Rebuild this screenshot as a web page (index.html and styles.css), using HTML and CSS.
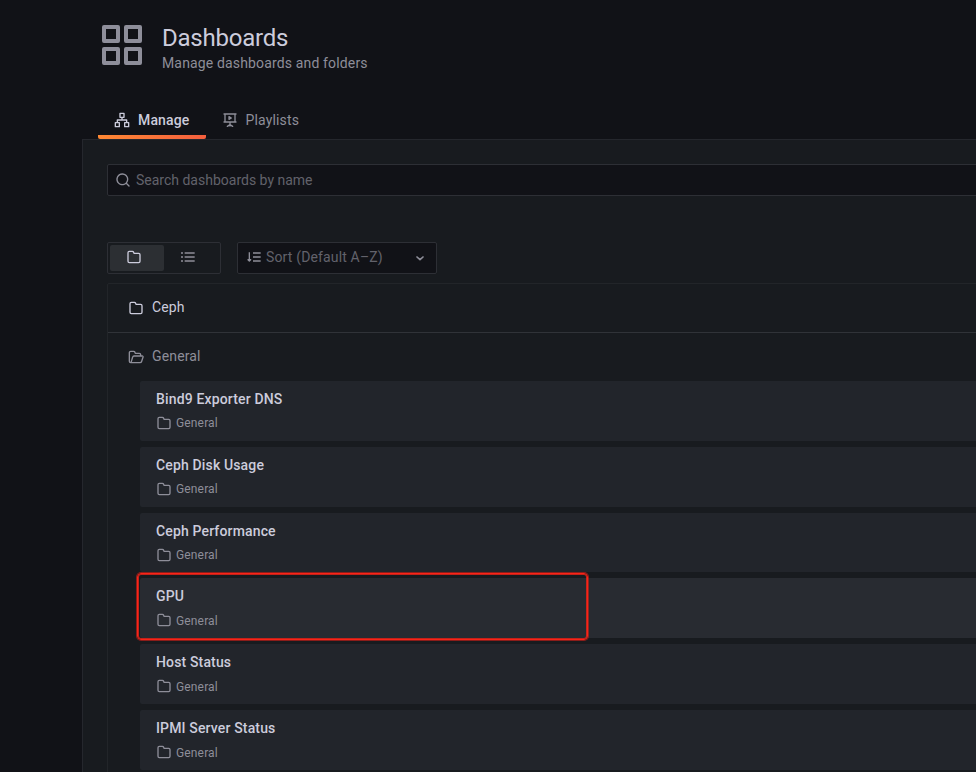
FILE: index.html
```html
<!DOCTYPE html>
<html lang="en">
<head>
<meta charset="utf-8">
<title>Dashboards</title>
<link rel="stylesheet" href="styles.css">
</head>
<body>
<svg class="sprite" aria-hidden="true">
  <symbol id="apps" viewBox="0 0 24 24"><path fill-rule="evenodd" d="M3 2h7a1 1 0 0 1 1 1v7a1 1 0 0 1-1 1H3a1 1 0 0 1-1-1V3a1 1 0 0 1 1-1Zm1 2v5h5V4ZM14 2h7a1 1 0 0 1 1 1v7a1 1 0 0 1-1 1h-7a1 1 0 0 1-1-1V3a1 1 0 0 1 1-1Zm1 2v5h5V4ZM3 13h7a1 1 0 0 1 1 1v7a1 1 0 0 1-1 1H3a1 1 0 0 1-1-1v-7a1 1 0 0 1 1-1Zm1 2v5h5v-5ZM14 13h7a1 1 0 0 1 1 1v7a1 1 0 0 1-1 1h-7a1 1 0 0 1-1-1v-7a1 1 0 0 1 1-1Zm1 2v5h5v-5Z"/></symbol>
  <symbol id="folder" viewBox="0 0 24 24"><path d="M19,5.5H12.72l-.32-1a3,3,0,0,0-2.84-2H5a3,3,0,0,0-3,3v13a3,3,0,0,0,3,3H19a3,3,0,0,0,3-3V8.5A3,3,0,0,0,19,5.5Zm1,13a1,1,0,0,1-1,1H5a1,1,0,0,1-1-1V5.5a1,1,0,0,1,1-1H9.56a1,1,0,0,1,.95.68l.54,1.64A1,1,0,0,0,12,7.5h7a1,1,0,0,1,1,1Z"/></symbol>
  <symbol id="folder-open" viewBox="0 0 24 24"><path class="line" d="M4 20.5a2 2 0 0 1-2-2v-13a2 2 0 0 1 2-2h4.5a2 2 0 0 1 1.9 1.4l.5 1.6H17a2 2 0 0 1 2 2v2M4 20.5h14a2.5 2.5 0 0 0 2.4-1.8L22.6 12a1.2 1.2 0 0 0-1.2-1.5H9a2 2 0 0 0-2 1.5l-2 7a2 2 0 0 1-1 1.5"/></symbol>
  <symbol id="search" viewBox="0 0 24 24"><path d="M21.71,20.29,18,16.61A9,9,0,1,0,16.61,18l3.68,3.68a1,1,0,0,0,1.42,0A1,1,0,0,0,21.71,20.29ZM11,18a7,7,0,1,1,7-7A7,7,0,0,1,11,18Z"/></symbol>
  <symbol id="sitemap" viewBox="0 0 24 24"><path class="line" d="M9 2h6v6H9ZM2 16h6v6H2ZM16 16h6v6h-6ZM12 8v4M5 16v-4h14v4"/></symbol>
  <symbol id="presentation" viewBox="0 0 24 24"><path class="line" d="M3 3h18M4.5 3v12h15V3M3 15h18M12 15v6M8 21.5l4-2.500 4 2.500M10.500 7v4l3.500-2Z"/></symbol>
  <symbol id="list" viewBox="0 0 24 24"><path class="line flat" d="M7 6h15M7 12h15M7 18h15M1.5 6h3M1.5 12h3M1.5 18h3"/></symbol>
  <symbol id="sort" viewBox="0 0 24 24"><path class="line flat" d="M10.5 6H22M10.5 12H22M10.5 18H22M5 5v13"/><path class="line" d="m3 16 2 2 2-2Z"/></symbol>
  <symbol id="down" viewBox="0 0 24 24"><path class="line bold" d="m7.5 10.5 4.5 4 4.5-4"/></symbol>
</svg>

<header class="page-header">
  <svg class="page-logo"><use href="#apps"/></svg>
  <div>
    <h1>Dashboards</h1>
    <p class="subtitle">Manage dashboards and folders</p>
  </div>
</header>

<nav class="tabs">
  <a class="tab active"><svg class="icon"><use href="#sitemap"/></svg>Manage</a>
  <a class="tab"><svg class="icon"><use href="#presentation"/></svg>Playlists</a>
</nav>

<main class="panel">
  <div class="search"><svg class="icon"><use href="#search"/></svg><span>Search dashboards by name</span></div>

  <div class="toolbar">
    <div class="layout-toggle">
      <span class="option selected"><svg class="icon"><use href="#folder"/></svg></span>
      <span class="option"><svg class="icon"><use href="#list"/></svg></span>
    </div>
    <div class="sort"><svg class="icon"><use href="#sort"/></svg><span>Sort (Default A–Z)</span><svg class="icon chevron"><use href="#down"/></svg></div>
  </div>

  <section class="folders">
    <div class="folder closed"><svg class="icon"><use href="#folder"/></svg><span>Ceph</span></div>
    <div class="folder open"><svg class="icon"><use href="#folder-open"/></svg><span>General</span></div>
    <div class="cards">
      <article class="card"><h2>Bind9 Exporter DNS</h2><p><svg class="icon"><use href="#folder"/></svg>General</p></article>
      <article class="card"><h2>Ceph Disk Usage</h2><p><svg class="icon"><use href="#folder"/></svg>General</p></article>
      <article class="card"><h2>Ceph Performance</h2><p><svg class="icon"><use href="#folder"/></svg>General</p></article>
      <article class="card hovered"><h2>GPU</h2><p><svg class="icon"><use href="#folder"/></svg>General</p><span class="highlight"></span></article>
      <article class="card"><h2>Host Status</h2><p><svg class="icon"><use href="#folder"/></svg>General</p></article>
      <article class="card"><h2>IPMI Server Status</h2><p><svg class="icon"><use href="#folder"/></svg>General</p></article>
    </div>
  </section>
</main>
</body>
</html>
```
FILE: styles.css
```css
* { box-sizing: border-box; }

html, body { height: 100%; }

body {
  margin: 0;
  overflow: hidden;
  background: #111217;
  color: #ccccdc;
  font: 14px/22px Roboto, "Liberation Sans", sans-serif;
  letter-spacing: 0.15px;
}

h1, h2, p { margin: 0; }

.sprite { position: absolute; width: 0; height: 0; }
.icon { width: 16px; height: 16px; flex: none; fill: currentColor; }
.line { fill: none; stroke: currentColor; stroke-width: 2; stroke-linejoin: round; stroke-linecap: round; }
.flat { stroke-linecap: butt; }
.bold { stroke-width: 2.5; }

.page-header {
  display: flex;
  height: 99px;
  padding: 21px 0 0 98px;
  gap: 16px;
}
.page-logo { width: 48px; height: 48px; fill: #8e8e9a; }
h1 { font-size: 24px; line-height: 28px; font-weight: 400; letter-spacing: -0.22px; padding-top: 3px; }
.subtitle { color: #8e8e99; line-height: 22px; }

.tabs { display: flex; height: 40px; padding-left: 98px; }
.tab {
  display: flex;
  align-items: center;
  gap: 8px;
  height: 40px;
  padding: 2px 16px 0;
  color: #8e8e99;
}
.tab + .tab { gap: 7.5px; }
.tab.active {
  width: 108px;
  color: #ccccdc;
  font-weight: 500;
  background: linear-gradient(90deg, #ff8833, #f55f3e) bottom / 100% 4px no-repeat;
  border-radius: 2px;
}

.panel {
  height: 640px;
  margin-left: 82px;
  padding: 24px 0 0 24px;
  border: solid #25272d;
  border-width: 1px 0 0 1px;
  background: #181b1f;
}

.search, .sort, .layout-toggle {
  display: flex;
  align-items: center;
  height: 32px;
  border: 1px solid #2d2f35;
  border-radius: 2px;
}
.search {
  width: 900px;
  padding-left: 7px;
  gap: 5px;
  background: #111217;
  color: #62626b;
  letter-spacing: 0;
}
.search .icon { color: #8e8e99; }

.toolbar { display: flex; gap: 16px; margin-top: 46px; }
.layout-toggle { width: 114px; padding: 2px; color: #8e8e99; }
.option {
  display: flex;
  justify-content: center;
  align-items: center;
  width: 54px;
  height: 26px;
  padding: 0 6px 2px 0;
  border-radius: 2px;
}
.option.selected { background: #2c2f33; color: #ccccdc; }
.sort {
  width: 200px;
  padding: 0 8px;
  gap: 4px;
  background: #111217;
  color: #62626b;
}
.sort .icon { color: #8e8e99; }
.sort span { padding-bottom: 2px; }
.sort .icon:first-child { margin-bottom: 2px; }
.chevron { margin-left: auto; }

.folders {
  width: 900px;
  height: 520px;
  margin-top: 9px;
  border: 1px solid #222529;
  border-radius: 2px;
}
.folder { display: flex; align-items: center; gap: 8px; padding-left: 20px; height: 49px; }
.folder span { padding-bottom: 2px; }
.closed { border-bottom: 1px solid #303338; }
.open { height: 48px; color: #8e8e99; }

.cards { display: flex; flex-direction: column; gap: 6px; padding-left: 32px; }
.card {
  position: relative;
  height: 59.8px;
  padding: 8px 16px;
  border-radius: 2px;
  background: #22252b;
}
.card.hovered { background: #282b31; }
.card h2 { font-size: 14px; line-height: 20px; font-weight: 500; }
.card p {
  display: flex;
  align-items: center;
  gap: 4px;
  margin-top: 5px;
  font-size: 12px;
  line-height: 18px;
  color: #8e8e99;
}
.card:nth-child(n+4) p { margin-top: 5.6px; }
.card:nth-child(n+4) .icon { margin-bottom: 1.6px; }
.highlight {
  position: absolute;
  top: -5.4px;
  left: -3px;
  width: 451px;
  height: 67px;
  border: 1px solid #fa2418;
  border-radius: 4px;
  box-shadow: 0 0 0 1px #d8201899, inset 0 0 0 1px #f02418cc;
}
```
